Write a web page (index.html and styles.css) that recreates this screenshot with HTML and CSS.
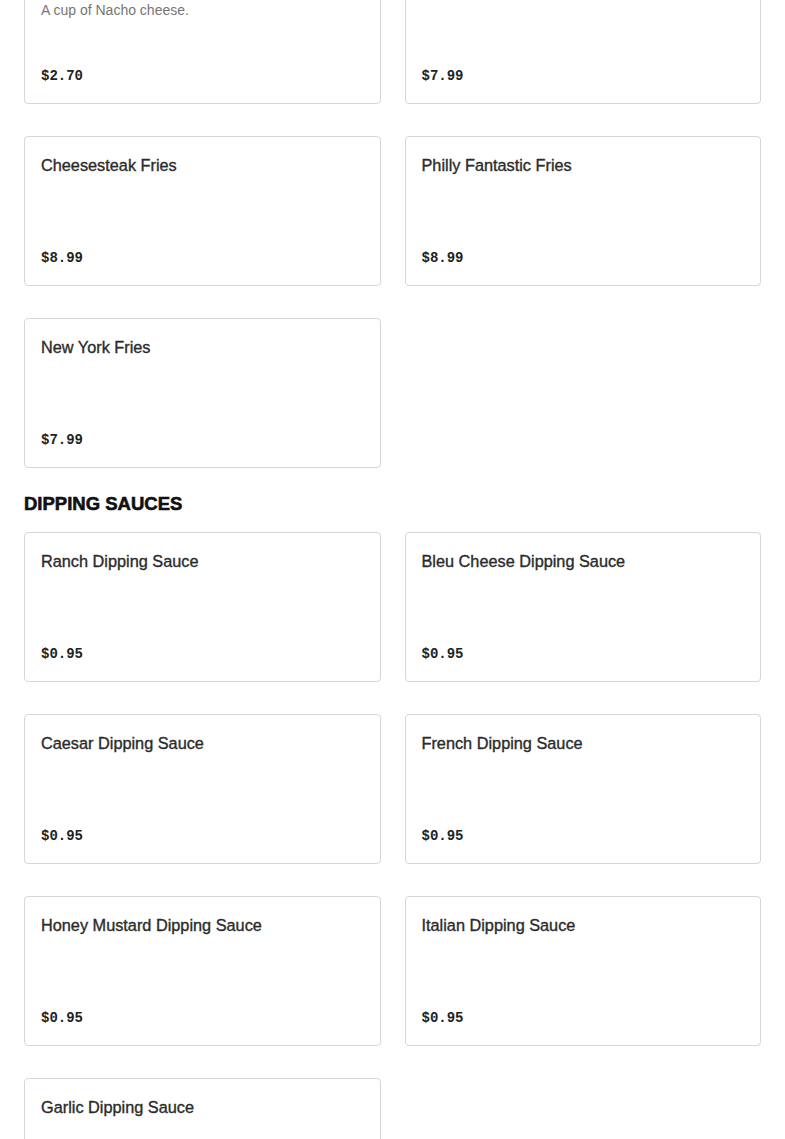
FILE: index.html
```html
<!DOCTYPE html>
<html lang="en">
<head>
<meta charset="utf-8">
<title>Menu</title>
<link rel="stylesheet" href="styles.css">
</head>
<body>
<main class="menu">
  <section class="section">
    <div class="grid">
      <div class="card">
        <div class="title">Nacho Cheese</div>
        <div class="desc">A cup of Nacho cheese.</div>
        <div class="price">$2.70</div>
      </div>
      <div class="card">
        <div class="title">Pizza Fries</div>
        <div class="price">$7.99</div>
      </div>
      <div class="card">
        <div class="title">Cheesesteak Fries</div>
        <div class="price">$8.99</div>
      </div>
      <div class="card">
        <div class="title">Philly Fantastic Fries</div>
        <div class="price">$8.99</div>
      </div>
      <div class="card">
        <div class="title">New York Fries</div>
        <div class="price">$7.99</div>
      </div>
    </div>
  </section>
  <section class="section">
    <h2 class="heading">DIPPING SAUCES</h2>
    <div class="grid">
      <div class="card">
        <div class="title">Ranch Dipping Sauce</div>
        <div class="price">$0.95</div>
      </div>
      <div class="card">
        <div class="title">Bleu Cheese Dipping Sauce</div>
        <div class="price">$0.95</div>
      </div>
      <div class="card">
        <div class="title">Caesar Dipping Sauce</div>
        <div class="price">$0.95</div>
      </div>
      <div class="card">
        <div class="title">French Dipping Sauce</div>
        <div class="price">$0.95</div>
      </div>
      <div class="card">
        <div class="title">Honey Mustard Dipping Sauce</div>
        <div class="price">$0.95</div>
      </div>
      <div class="card">
        <div class="title">Italian Dipping Sauce</div>
        <div class="price">$0.95</div>
      </div>
      <div class="card">
        <div class="title">Garlic Dipping Sauce</div>
        <div class="price">$0.95</div>
      </div>
    </div>
  </section>
</main>
</body>
</html>
```
FILE: styles.css
```css
html, body {
  margin: 0;
  padding: 0;
  background: #ffffff;
}
body {
  font-family: "Liberation Sans", Arial, sans-serif;
  color: #2b2b2b;
}
.menu {
  padding: 0 24px 40px;
  margin-top: -46px;
}
.grid {
  display: grid;
  grid-template-columns: 1fr 1fr;
  column-gap: 24px;
  row-gap: 32px;
}
.heading {
  margin: 24px 0 16px;
  font-size: 18.5px;
  line-height: 24px;
  font-weight: 700;
  color: #111111;
  -webkit-text-stroke: 0.6px #111111;
}
.card {
  box-sizing: border-box;
  min-height: 150px;
  border: 1px solid #d6d6d6;
  border-radius: 4px;
  padding: 16px 16px 15px;
  display: flex;
  flex-direction: column;
  background: #fff;
}
.title {
  font-size: 16.3px;
  line-height: 24px;
  font-weight: 400;
  color: #2b2b2b;
  -webkit-text-stroke: 0.35px #2b2b2b;
}
.desc {
  margin-top: 5px;
  font-size: 14px;
  line-height: 20px;
  color: #767676;
}
.price {
  margin-top: auto;
  padding-top: 16px;
  font-family: "Liberation Mono", "Courier New", monospace;
  font-weight: 700;
  font-size: 14px;
  line-height: 24px;
  color: #222222;
}
```
